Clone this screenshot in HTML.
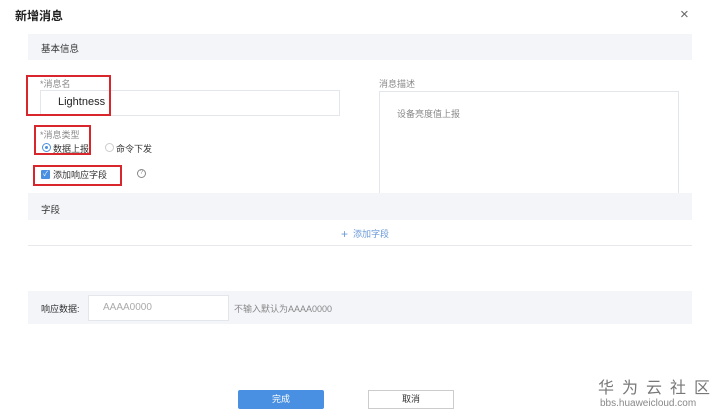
<!DOCTYPE html>
<html><head><meta charset="utf-8"><style>
*{margin:0;padding:0;box-sizing:border-box}
body{width:720px;height:417px;background:#fff;position:relative;overflow:hidden;font-family:"Liberation Sans","Noto Sans CJK SC",sans-serif;color:#333;font-size:9px}
.a{position:absolute;white-space:nowrap}
.bar{position:absolute;left:28px;width:664px;background:#f3f5f9}
.red{position:absolute;border:2px solid #d9262c}
.inp{position:absolute;border:1px solid #e3e6eb;background:#fff}
.g{color:#888}
</style></head><body>
<div class="a" style="left:15px;top:7px;font-size:12px;font-weight:bold;color:#222">新增消息</div>
<div class="a" style="left:680px;top:6px;font-size:15px;color:#666;font-weight:300">×</div>

<div class="bar" style="top:34px;height:26px"></div>
<div class="a" style="left:41px;top:41px;font-size:9.5px">基本信息</div>

<div class="a g" style="left:40px;top:77px">*消息名</div>
<div class="inp" style="left:40px;top:90px;width:300px;height:26px"></div>
<div class="a" style="left:58px;top:96px;font-size:11px;color:#222">Lightness</div>
<div class="red" style="left:26px;top:75px;width:85px;height:41px"></div>

<div class="a g" style="left:40px;top:128px">*消息类型</div>
<div class="a" style="left:42px;top:143px;width:9px;height:9px;border:1px solid #4a90e2;border-radius:50%"><div style="position:absolute;left:2px;top:2px;width:3px;height:3px;background:#4a90e2;border-radius:50%"></div></div>
<div class="a" style="left:53px;top:142px">数据上报</div>
<div class="a" style="left:105px;top:143px;width:9px;height:9px;border:1px solid #ccc;border-radius:50%"></div>
<div class="a" style="left:116px;top:142px">命令下发</div>
<div class="red" style="left:34px;top:125px;width:57px;height:30px"></div>

<div class="a" style="left:41px;top:170px;width:9px;height:9px;background:#4a90e2;border-radius:1px;color:#fff;font-size:7px;line-height:9px;text-align:center">✓</div>
<div class="a" style="left:53px;top:168px">添加响应字段</div>
<div class="a" style="left:137px;top:169px;width:9px;height:9px;border:1px solid #888;border-radius:50%;font-size:6px;line-height:7px;text-align:center;color:#888">?</div>
<div class="red" style="left:33px;top:165px;width:89px;height:21px"></div>

<div class="a g" style="left:379px;top:77px">消息描述</div>
<div class="inp" style="left:379px;top:91px;width:300px;height:107px"></div>
<div class="a g" style="left:397px;top:107px">设备亮度值上报</div>

<div class="bar" style="top:193px;height:27px"></div>
<div class="a" style="left:41px;top:202px;font-size:9.5px">字段</div>
<div class="a" style="left:341px;top:227px;color:#6b9ad8;font-size:9px"><span style="font-size:12px;vertical-align:-1px">+</span>&nbsp; 添加字段</div>
<div class="a" style="left:28px;top:245px;width:664px;height:1px;background:#e6e8ec"></div>

<div class="bar" style="top:291px;height:33px"></div>
<div class="a" style="left:41px;top:302px">响应数据:</div>
<div class="inp" style="left:88px;top:295px;width:141px;height:26px"></div>
<div class="a" style="left:103px;top:302px;color:#aaa;font-size:10px">AAAA0000</div>
<div class="a g" style="left:234px;top:302px">不输入默认为AAAA0000</div>

<div class="a" style="left:238px;top:390px;width:86px;height:19px;background:#4a90e2;color:#fff;text-align:center;line-height:19px;border-radius:2px">完成</div>
<div class="a" style="left:368px;top:390px;width:86px;height:19px;border:1px solid #ccc;text-align:center;line-height:17px">取消</div>

<div class="a" style="left:598px;top:374px;font-size:16px;color:#777;letter-spacing:8px">华为云社区</div>
<div class="a" style="left:600px;top:398px;font-size:10px;color:#888">bbs.huaweicloud.com</div>
</body></html>
